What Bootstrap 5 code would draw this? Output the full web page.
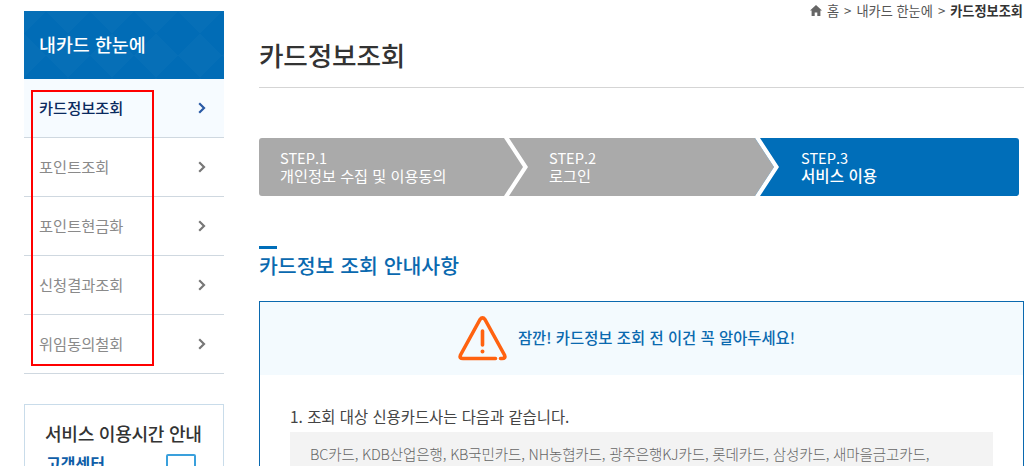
<!DOCTYPE html>
<html lang="ko">
<head>
<meta charset="utf-8">
<title>카드정보조회</title>
<link href="https://cdn.jsdelivr.net/npm/bootstrap@5.3.0/dist/css/bootstrap.min.css" rel="stylesheet">
<style>
html,body{height:466px;overflow:hidden}
body{font-family:"Noto Sans CJK KR","Noto Sans",sans-serif;background:#fff;color:#333;width:1035px;position:relative}
.shell{padding-left:24px;gap:35px;height:466px;overflow:hidden}
.side{width:200px;padding-top:11px;flex:none}
.side-head{height:68px;padding-left:15px;color:#fff;font-size:18.4px;font-weight:500;background-color:#016cb6;
background-image:linear-gradient(45deg,rgba(255,255,255,.02) 25%,transparent 25%,transparent 75%,rgba(255,255,255,.02) 75%),linear-gradient(-45deg,rgba(255,255,255,.02) 25%,transparent 25%,transparent 75%,rgba(255,255,255,.02) 75%);background-size:44px 44px}
.side-item{height:59px;padding:0 18px 2px 15px;border-bottom:1px solid #cfd8e0;color:#8a8a8a;font-size:15.3px}
.side-item.is-on{background:#f6fbff;color:#0a2a5e;font-weight:500}
.side-item svg{stroke:#777;margin-top:2px}
.side-item.is-on svg{stroke:#2a5aa5}
.info-box{margin-top:30px;height:120px;border:1px solid #c9dcea;padding-top:17px;padding-left:20px;padding-right:27px}
.info-title{font-size:18.1px;font-weight:500;color:#333;line-height:22px;letter-spacing:-.3px;white-space:nowrap}
.info-sub{color:#0f5ea8;font-size:16px;font-weight:700;line-height:22px;margin-left:1px}
.info-ico{width:30px;height:24px;border:2px solid #3aa0dc;border-radius:2px;margin-top:2px}
.main-col{width:765px;flex:none}
.crumb{height:20px;padding-top:1px;font-size:13.2px;line-height:18px;color:#555;gap:5px;margin-right:1px}
.crumb b{color:#333;font-weight:700}
.page-title{font-size:26.7px;font-weight:500;color:#333;height:68px;padding-top:15px;margin:0;line-height:40px;border-bottom:1px solid #d5d5d5;letter-spacing:-.2px}
.steps{margin-top:50px;width:760px;height:58px;color:#fff;font-size:15.2px;line-height:18px;font-weight:400;border-radius:3px;overflow:hidden}
.stp{background:#aaa;height:58px;padding-top:11px}
.stp b{font-weight:500;font-size:15.6px}
.stp-num{display:block;font-size:14.6px;line-height:17px}
.stp-a{width:245px;padding-left:21px}
.stp-b{width:226px;padding-left:20px}
.stp-c{width:239px;padding-left:21px;background:#006eb9}
.steps svg{flex:none;display:block}
.sec-head{margin-top:50px;color:#0a69af;font-size:20.5px;font-weight:500;line-height:28px;height:55px}
.sec-head::before{content:"";display:block;width:18px;height:3px;background:#006eb9;margin-bottom:2px}
.notice{border:1px solid #0a69af;height:300px}
.notice-top{height:73px;background:#f3fafe;color:#0a69af;font-size:15.4px;font-weight:500;gap:10px;padding:0 31px 2px 0}
.notice-body{padding:29px 30px 0 30px}
.notice-q{font-size:15.4px;line-height:24px;color:#444}
.notice-list{background:#f3f3f3;margin-top:4px;padding:11px 20px;font-size:14.55px;line-height:22px;color:#666;font-weight:300;letter-spacing:-.15px;white-space:nowrap}
.red-frame{position:absolute;left:31px;top:90px;width:123px;height:276px;border:2px solid #f00;pointer-events:none}
</style>
</head>
<body>
<div class="shell d-flex">
  <aside class="side">
    <div class="side-head d-flex align-items-center">내카드 한눈에</div>
    <div class="side-item is-on d-flex align-items-center justify-content-between">카드정보조회<svg width="8" height="12" viewBox="0 0 8 12" fill="none" stroke-width="2.2"><polyline points="1.2,1.2 6,6 1.2,10.8"/></svg></div>
    <div class="side-item d-flex align-items-center justify-content-between">포인트조회<svg width="8" height="12" viewBox="0 0 8 12" fill="none" stroke-width="2.2"><polyline points="1.2,1.2 6,6 1.2,10.8"/></svg></div>
    <div class="side-item d-flex align-items-center justify-content-between">포인트현금화<svg width="8" height="12" viewBox="0 0 8 12" fill="none" stroke-width="2.2"><polyline points="1.2,1.2 6,6 1.2,10.8"/></svg></div>
    <div class="side-item d-flex align-items-center justify-content-between">신청결과조회<svg width="8" height="12" viewBox="0 0 8 12" fill="none" stroke-width="2.2"><polyline points="1.2,1.2 6,6 1.2,10.8"/></svg></div>
    <div class="side-item d-flex align-items-center justify-content-between">위임동의철회<svg width="8" height="12" viewBox="0 0 8 12" fill="none" stroke-width="2.2"><polyline points="1.2,1.2 6,6 1.2,10.8"/></svg></div>
    <div class="info-box">
      <div class="info-title">서비스 이용시간 안내</div>
      <div class="d-flex justify-content-between mt-2">
        <div class="info-sub">고객센터</div>
        <div class="info-ico"></div>
      </div>
    </div>
  </aside>
  <main class="main-col">
    <div class="crumb d-flex justify-content-end align-items-center">
      <svg width="12" height="11" viewBox="0 0 12 11" fill="#666"><path d="M6 0 12 5.6H10.4V11H7.3V7.4H4.7V11H1.6V5.6H0Z"/></svg>
      <span>홈</span><span>&gt;</span><span>내카드 한눈에</span><span>&gt;</span><b>카드정보조회</b>
    </div>
    <h1 class="page-title">카드정보조회</h1>
    <div class="steps d-flex">
      <div class="stp stp-a"><span class="stp-num">STEP.1</span>개인정보 수집 및 이용동의</div>
      <svg width="25" height="58" viewBox="0 0 25 58"><rect width="25" height="58" fill="#aaa"/><polygon points="0,0 5,0 24,29 5,58 0,58 19,29" fill="#fff"/></svg>
      <div class="stp stp-b"><span class="stp-num">STEP.2</span>로그인</div>
      <svg width="25" height="58" viewBox="0 0 25 58"><rect width="25" height="58" fill="#006eb9"/><polygon points="0,0 19,29 0,58" fill="#aaa"/><polygon points="0,0 5,0 24,29 5,58 0,58 19,29" fill="#fff"/></svg>
      <div class="stp stp-c"><span class="stp-num">STEP.3</span><b>서비스 이용</b></div>
    </div>
    <div class="sec-head">카드정보 조회 안내사항</div>
    <section class="notice">
      <div class="notice-top d-flex align-items-center justify-content-center">
        <svg width="51" height="46" viewBox="0 0 50 46" fill="none" stroke="#ff6210" stroke-width="3.6" stroke-linecap="round" stroke-linejoin="round"><path d="M38 43.5H5.5Q1.5 43.5 3 40L22.5 4.5Q25 1.2 27.5 4.5L47 40Q48.5 43.5 44.5 43.5H43"/><line x1="25" y1="16" x2="25" y2="30"/><circle cx="25" cy="36.5" r="1.2" fill="#ff6210" stroke-width="1.6"/></svg>
        <span>잠깐! 카드정보 조회 전 이건 꼭 알아두세요!</span>
      </div>
      <div class="notice-body">
        <div class="notice-q">1. 조회 대상 신용카드사는 다음과 같습니다.</div>
        <div class="notice-list">BC카드, KDB산업은행, KB국민카드, NH농협카드, 광주은행KJ카드, 롯데카드, 삼성카드, 새마을금고카드,</div>
      </div>
    </section>
  </main>
</div>
<div class="red-frame"></div>
<script src="https://cdn.jsdelivr.net/npm/bootstrap@5.3.0/dist/js/bootstrap.bundle.min.js"></script>
</body>
</html>
